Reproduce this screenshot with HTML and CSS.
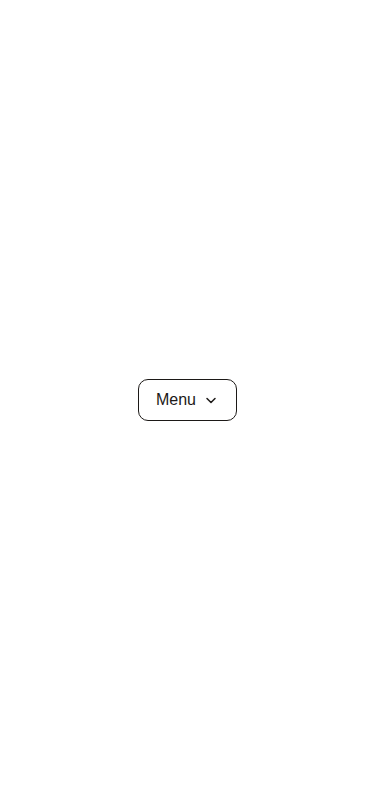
FILE: index.html
```html
<!DOCTYPE html>
<html>
<head>
  <title>Menu</title>
  <link rel="stylesheet" href="styles.css">
</head>
<body>
  <div class="page">
    <button class="menu-button" type="button">
      <span class="menu-label">Menu</span>
      <svg class="menu-chevron" width="16" height="16" viewBox="0 0 16 16" fill="none">
        <path d="M4 6.5 L8 10.5 L12 6.5" stroke="#1c1917" stroke-width="1.5" stroke-linecap="round" stroke-linejoin="round"/>
      </svg>
    </button>
  </div>
</body>
</html>
```

FILE: styles.css
```css
html, body {
  margin: 0;
  padding: 0;
  background-color: #fff;
  font-family: "Liberation Sans", Arial, sans-serif;
}

.page {
  height: 800px;
  display: flex;
  align-items: center;
  justify-content: center;
}

.menu-button {
  display: flex;
  align-items: center;
  gap: 7px;
  height: 42px;
  padding: 0 17px;
  border: 1px solid #1c1917;
  border-radius: 10px;
  background-color: #fff;
  color: #1c1917;
  font-family: "Liberation Sans", Arial, sans-serif;
  font-size: 16px;
  cursor: pointer;
}

.menu-chevron {
  display: block;
}
```
